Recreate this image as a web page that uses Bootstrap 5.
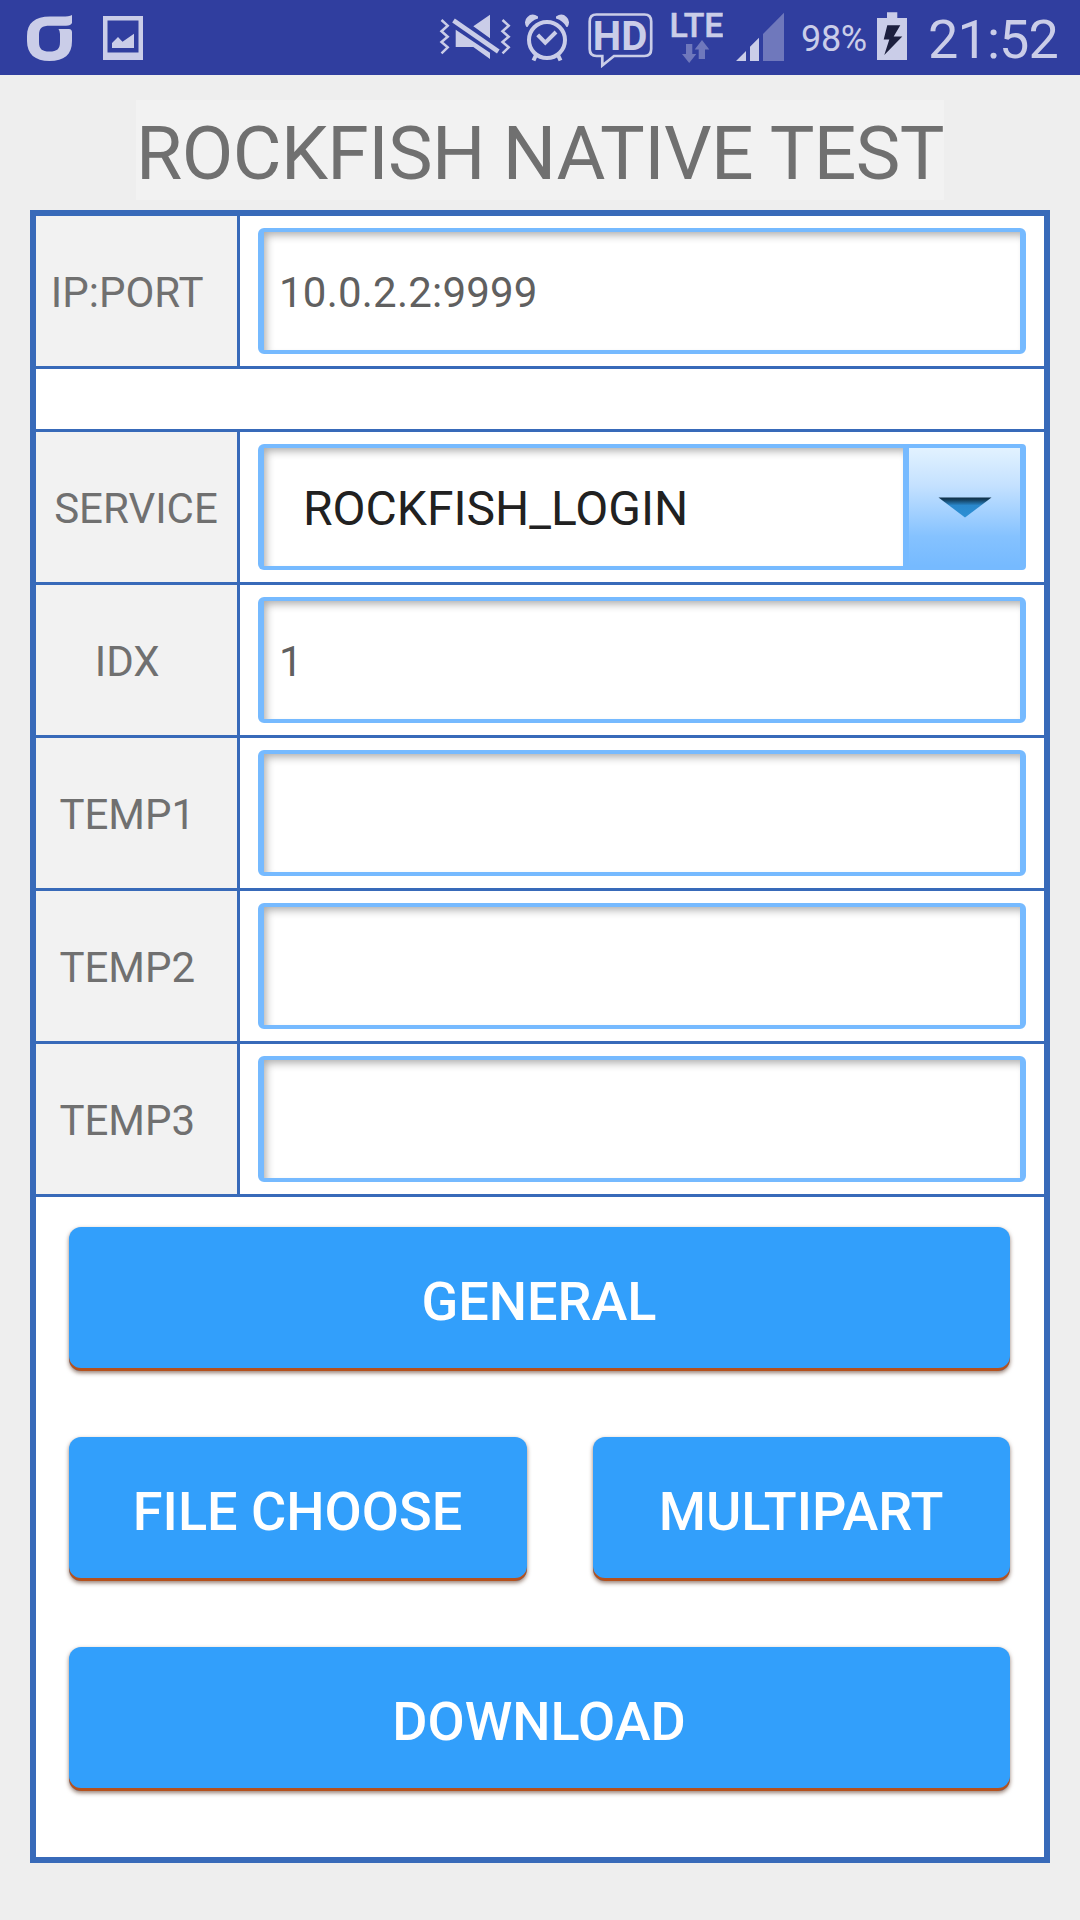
<!DOCTYPE html>
<html lang="en">
<head>
<meta charset="utf-8">
<meta name="viewport" content="width=device-width, initial-scale=1">
<title>Rockfish Native Test</title>
<link href="https://cdn.jsdelivr.net/npm/bootstrap@5.3.0/dist/css/bootstrap.min.css" rel="stylesheet">
<style>
  body { font-family: Roboto, "Noto Sans", sans-serif; background: #eee; min-height: 1920px; color: #707070; }
  .statusbar { height: 75px; background: #303e9f; color: #cacde8; padding-left: 27px; padding-right: 21px; }
  .statusbar svg { display: block; height: 75px; flex: none; }
  .ico-image { margin-left: 30px; }
  .ico-alarm { margin-left: 13px; }
  .ico-hd { margin-left: 17px; }
  .ico-lte { margin-left: 18px; }
  .ico-signal { margin-left: 13px; }
  .battery-pct { font-size: 36px; line-height: 42px; width: 70px; margin: 18px 6px 0 17px; letter-spacing: -.3px; }
  .clock { font-size: 54px; line-height: 64px; width: 131px; margin: 8px 0 0 21px; letter-spacing: -.9px; white-space: nowrap; }
  .app-title { font-size: 75px; line-height: 100px; height: 100px; font-weight: 400; background: #f2f2f2; margin: 25px auto 10px; color: #707070; width: 808px; padding-top: 5px; letter-spacing: -.6px; white-space: nowrap; }
  .panel { margin: 0 30px; height: 1653px; border: 6px solid #386ab9; background: #fff; }
  .field-row { height: 153px; border-bottom: 3px solid #386ab9; }
  .field-label { width: 204px; border-right: 3px solid #386ab9; background: #f2f2f2; font-size: 42px; padding-right: 18.5px; padding-top: 2px; flex: none; }
  .field-label.full { padding-right: 1px; }
  .field-value { padding: 12px 18px; }
  .spacer-row { height: 63px; border-bottom: 3px solid #386ab9; }
  .field-value .form-control, .field-value .form-select {
    height: 126px; border: solid #76baff; border-width: 4.5px 6px; border-radius: 6px; padding: 2px 12px 0 15px; font-size: 42px; letter-spacing: .22px;
    color: #606060; background: #fff; box-shadow: inset 4px 5px 9px -2px rgba(0,0,0,.33); }
  .field-value .form-select { font-size: 48px; letter-spacing: 0; color: #212121; padding-top: 4px; padding-left: 39px; border-right: 0; border-radius: 6px 0 0 6px; }
  .drop-btn { width: 123px; border: solid #76baff; border-width: 4.5px 6px; border-radius: 0 4px 4px 0; background: linear-gradient(#e2f2ff, #c4e1ff 32%, #85c2ff 75%, #76baff); padding: 0; }
  .drop-btn svg { display: block; margin: 0 auto; }
  .actions { padding: 30px 34px 0 33px; gap: 66px; }
  .actions .btn { height: 144px; border: 0; border-radius: 12px; background: #329ffb; color: #fff; font-size: 54px; font-weight: 500; padding: 4px 1px 0 0; box-shadow: inset 0 -3px 0 #b5511d, 0 2px 4px rgba(80,40,20,.6); }
  .choose { width: 458px; flex: none; }
  .multi { margin-left: 66px; }
</style>
<script src="https://cdn.jsdelivr.net/npm/bootstrap@5.3.0/dist/js/bootstrap.bundle.min.js"></script>
</head>
<body>
<header class="statusbar d-flex align-items-start">
  <svg width="46" viewBox="27 0 46 75" fill="currentColor"><path d="M72 15V23Q71 25.500 66 25.700H50C42 25.700 39 28 39 35V42C39 49 42 51.500 49.500 51.500S60 49 60 42V34Q60 31 58.500 29H69Q72 29 72 32.500V41C72 55 64 61 49.500 61S27 54 27 41V36C27 23 35 16.500 50 16.500H62Q69 16.500 72 15Z"/></svg>
  <svg class="ico-image" width="40" viewBox="103 0 40 75" fill="currentColor"><path fill-rule="evenodd" d="M103 16h40v44h-40zM107.500 20.500v32h31v-32z"/><path d="M112 48v-5l6-6 4.500 4.700L134 33.700V48z"/></svg>
  <svg class="ms-auto" width="72" viewBox="439 0 72 75" fill="currentColor"><g fill="none" stroke="currentColor" stroke-width="2.500"><path d="M441.500 20l6.200 5.700-6.200 5.600 6.200 5.400-6.200 5.300 6.200 5.300-6.200 6M502.500 20l6.200 5.700-6.200 5.600 6.200 5.400-6.200 5.300 6.200 5.300-6.200 6"/><path stroke-width="4.600" d="M453.500 20.500L498.300 51.500"/></g><path d="M473.300 26.300L490 14.700V38.300zM455.700 29.700L490 52.700V59L473.300 47H455.700z"/></svg>
  <svg class="ico-alarm" width="46" viewBox="524 0 46 75" fill="none" stroke="currentColor" stroke-width="4"><circle cx="547" cy="40" r="18"/><path d="M537.700 34.800l7.600 7.800L556 32M536 55l-2.500 5.500M558 55l2.500 5.500"/><path stroke="none" fill="currentColor" d="M526.500 27Q523 21 527.500 17Q532 12.500 538 16.500V18.500Q531 20.500 527.500 27zM567.500 27Q571 21 566.500 17Q562 12.500 556 16.500V18.500Q563 20.500 566.500 27z"/></svg>
  <svg class="ico-hd" width="66" viewBox="587 0 66 75" fill="none" stroke="currentColor" stroke-width="2.700"><path d="M596.500 14.500H644.500Q651.200 14.500 651.200 21.500V49Q651.200 56 644.500 56H614L602.300 65.500V56H596.500Q589.700 56 589.700 49V21.500Q589.700 14.500 596.500 14.500Z"/><text x="592.800" y="50.200" font-family="Roboto" font-size="41.500" font-weight="700" fill="currentColor" stroke="none" textLength="54.500" lengthAdjust="spacingAndGlyphs">HD</text></svg>
  <svg class="ico-lte" width="52" viewBox="671 0 52 75" fill="currentColor"><text x="669.500" y="37" font-family="Roboto" font-size="33.500" font-weight="500" stroke="currentColor" stroke-width=".5" textLength="54" lengthAdjust="spacingAndGlyphs">LTE</text><path fill="#6f78bc" d="M686 44h6.300v10h4L689.200 63 682 54h4zM698.700 59v-9.500h-4L702 40l7.300 9.500H705V59z"/></svg>
  <svg class="ico-signal" width="48" viewBox="736 0 48 75" fill="currentColor"><path d="M736 61l10-10v10zM750 61V46.700l9-9V61z"/><path fill="#6f78bc" d="M763 61V34l21-21.300V61z"/></svg>
  <span class="battery-pct">98%</span>
  <svg width="30" viewBox="877 0 30 75" fill="currentColor"><path d="M877 18h10v-5.700h10.300V18H907V60H877z"/><path fill="#1c1f3e" d="M887.300 25.300h13L893.700 36.500h8.600L884.300 55l5-15.500h-5.600z"/></svg>
  <span class="clock">21:52</span>
</header>

<h1 class="app-title text-center d-flex align-items-center justify-content-center">ROCKFISH NATIVE TEST</h1>

<main class="panel">
  <div class="field-row d-flex">
    <label class="field-label d-flex align-items-center justify-content-center" for="host">IP:PORT</label>
    <div class="field-value flex-grow-1"><input id="host" class="form-control" value="10.0.2.2:9999"></div>
  </div>
  <div class="spacer-row"></div>
  <div class="field-row d-flex">
    <label class="field-label full d-flex align-items-center justify-content-center" for="service">SERVICE</label>
    <div class="field-value flex-grow-1 d-flex">
      <select id="service" class="form-select flex-grow-1 w-auto"><option>ROCKFISH_LOGIN</option></select>
      <button type="button" class="btn drop-btn" aria-label="Open list">
        <svg width="54" height="21" viewBox="0 0 54 21"><defs><linearGradient id="tri" x2="0" y2="1"><stop stop-color="#0f2e45"/><stop offset=".12" stop-color="#14405f"/><stop offset=".4" stop-color="#2a88cc"/><stop offset="1" stop-color="#2c90d6"/></linearGradient></defs><path d="M.500 .500H53.500L27 20.500z" fill="url(#tri)"/></svg>
      </button>
    </div>
  </div>
  <div class="field-row d-flex">
    <label class="field-label d-flex align-items-center justify-content-center" for="idx">IDX</label>
    <div class="field-value flex-grow-1"><input id="idx" class="form-control" value="1"></div>
  </div>
  <div class="field-row d-flex">
    <label class="field-label d-flex align-items-center justify-content-center" for="temp1">TEMP1</label>
    <div class="field-value flex-grow-1"><input id="temp1" class="form-control"></div>
  </div>
  <div class="field-row d-flex">
    <label class="field-label d-flex align-items-center justify-content-center" for="temp2">TEMP2</label>
    <div class="field-value flex-grow-1"><input id="temp2" class="form-control"></div>
  </div>
  <div class="field-row d-flex">
    <label class="field-label d-flex align-items-center justify-content-center" for="temp3">TEMP3</label>
    <div class="field-value flex-grow-1"><input id="temp3" class="form-control"></div>
  </div>
  <div class="actions d-flex flex-column">
    <button type="button" class="btn w-100">GENERAL</button>
    <div class="d-flex">
      <button type="button" class="btn choose">FILE CHOOSE</button>
      <button type="button" class="btn multi flex-grow-1">MULTIPART</button>
    </div>
    <button type="button" class="btn w-100">DOWNLOAD</button>
  </div>
</main>
</body>
</html>
